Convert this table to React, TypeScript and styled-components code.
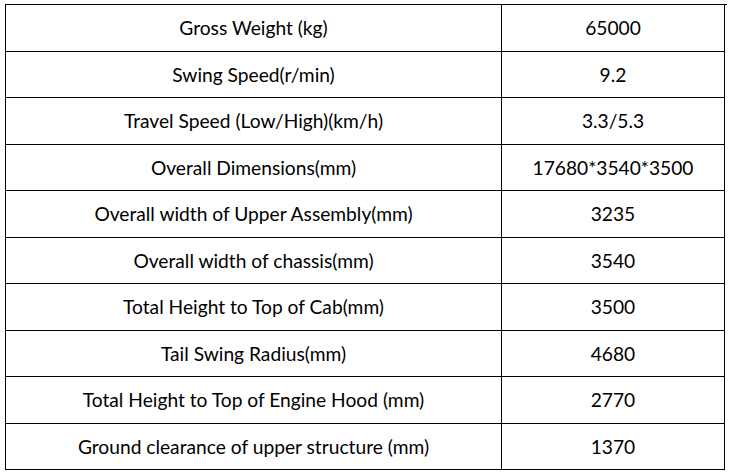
import React from "react";
import styled, { createGlobalStyle } from "styled-components";

const GlobalStyle = createGlobalStyle`
  html, body {
    margin: 0;
    padding: 0;
    background: #ffffff;
  }
  body {
    font-family: "Lato", "Open Sans", sans-serif;
  }
`;

const Page = styled.div`
  padding: 4px 0 0 5px;
`;

const SpecTable = styled.div`
  display: grid;
  grid-template-columns: 496px 223px;
  width: 722px;
  box-sizing: border-box;
  border-top: 1px solid #000;
  border-left: 1px solid #000;
`;

const Cell = styled.div<{ $tall: boolean }>`
  height: ${(p) => (p.$tall ? 46 : 45)}px;
  box-sizing: content-box;
  border-right: 1px solid #000;
  border-bottom: 1px solid #000;
  display: flex;
  align-items: center;
  justify-content: center;
  padding-bottom: 0;
  font-size: 19.2px;
  line-height: 1;
  color: #000;
  white-space: nowrap;
`;

const rows: [string, string][] = [
  ["Gross Weight (kg)", "65000"],
  ["Swing Speed(r/min)", "9.2"],
  ["Travel Speed (Low/High)(km/h)", "3.3/5.3"],
  ["Overall Dimensions(mm)", "17680*3540*3500"],
  ["Overall width of Upper Assembly(mm)", "3235"],
  ["Overall width of chassis(mm)", "3540"],
  ["Total Height to Top of Cab(mm)", "3500"],
  ["Tail Swing Radius(mm)", "4680"],
  ["Total Height to Top of Engine Hood (mm)", "2770"],
  ["Ground clearance of upper structure (mm)", "1370"],
];

export default function App() {
  return (
    <>
      <GlobalStyle />
      <Page>
        <SpecTable>
          {rows.map(([label, value], i) => (
            <React.Fragment key={label}>
              <Cell $tall={i % 2 === 0}>{label}</Cell>
              <Cell $tall={i % 2 === 0}>{value}</Cell>
            </React.Fragment>
          ))}
        </SpecTable>
      </Page>
    </>
  );
}
